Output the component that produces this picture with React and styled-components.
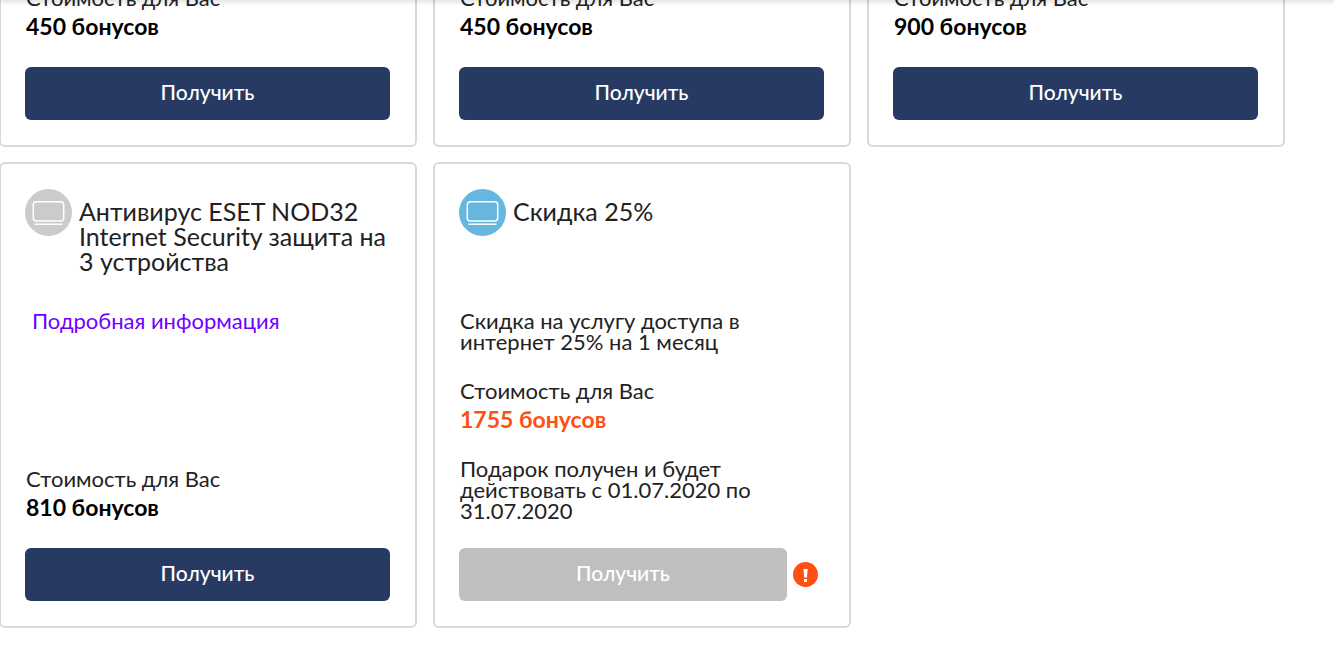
import React from "react";
import styled, { createGlobalStyle } from "styled-components";

const FONT = `Lato, "Noto Sans", sans-serif`;

const GlobalStyle = createGlobalStyle`
    body {
        margin: 0;
        background-color: white;
        color: #222;
        font-family: ${FONT};
        font-size: 22px;
        line-height: 21px;
    }
`;

const Page = styled.main`
    overflow: hidden;
    padding-bottom: 44px;
`;

const HeaderEdge = styled.div`
    position: fixed;
    top: 0;
    left: 0;
    right: 0;
    height: 0;
    box-shadow: 0 0 5px 1px rgba(0, 0, 0, 0.3);
`;

const Gifts = styled.div`
    display: grid;
    grid-template-columns: repeat(3, 1fr);
    gap: 15px 16px;
    margin: -16px 49px 0 -1px;
`;

const Card = styled.article`
    display: flex;
    flex-direction: column;
    box-sizing: border-box;
    min-height: ${({ $collapsed }) => ($collapsed ? "0" : "466px")};
    padding: ${({ $collapsed }) => ($collapsed ? "0" : "25px")} 25px 25px 24px;
    border: 2px solid #d9d9d9;
    border-top-width: ${({ $collapsed }) => ($collapsed ? "0" : "2px")};
    border-radius: 6px;
`;

const CardHeader = styled.header`
    display: flex;
    align-items: flex-start;
    gap: 7px;
    min-height: 121px;

    svg {
        flex: none;
    }
`;

const Title = styled.h2`
    margin: 0;
    padding-top: 10px;
    font-size: 25px;
    font-weight: 400;
    line-height: 25px;
`;

const Description = styled.p`
    margin: 0;
    padding-left: 1px;
    max-width: 310px;
`;

const DetailsLink = styled.a`
    padding-left: 7px;
    color: #7000ff;
    text-decoration: none;
`;

const Cost = styled.div`
    margin-top: auto;
    padding-left: 1px;
    line-height: 28px;

    strong {
        display: block;
        color: ${({ $accent }) => ($accent ? "#ff4f12" : "#000")};
        font-size: 23px;
        font-weight: 700;
    }
`;

const Note = styled.p`
    margin: 25px 0 0;
    padding-left: 1px;
    max-width: 310px;
`;

const Actions = styled.div`
    display: flex;
    align-items: center;
    gap: 6px;
    margin-top: 27px;
    padding-right: ${({ $warning }) => ($warning ? "6px" : "0")};
`;

const GetButton = styled.button`
    flex: 1;
    height: 53px;
    padding: 0 16px 4px;
    border: none;
    border-radius: 6px;
    background-color: #273a64;
    color: white;
    font-family: inherit;
    font-size: 21px;
    font-weight: 500;
    cursor: pointer;

    &:disabled {
        background-color: #bfbfbf;
        cursor: default;
    }
`;

const MonitorIcon = ({ color }) => (
    <svg width="47" height="47" viewBox="0 0 47 47" aria-hidden="true">
        <circle cx="23.5" cy="23.5" r="23.5" fill={color} />
        <g fill="none" stroke="white" strokeWidth="1.5">
            <rect x="8.3" y="12.8" width="30.4" height="19.2" rx="3" />
            <path d="M9.5 35.2H37.5" />
        </g>
    </svg>
);

const WarningIcon = () => (
    <svg width="25" height="25" viewBox="0 0 25 25" aria-hidden="true">
        <circle cx="12.5" cy="12.5" r="12.5" fill="#ff4f12" />
        <path d="M10.5 7H14.7L14 15.5H11.2Z" fill="white" />
        <rect x="11" y="17" width="3" height="3" fill="white" />
    </svg>
);

const GiftCard = ({
    title,
    iconColor,
    description,
    link,
    cost,
    note,
    received
}) => (
    <Card $collapsed={!title}>
        {title && (
            <CardHeader>
                <MonitorIcon color={iconColor} />
                <Title>{title}</Title>
            </CardHeader>
        )}
        {link && <DetailsLink href="#details">{link}</DetailsLink>}
        {description && <Description>{description}</Description>}
        <Cost $accent={received}>
            Стоимость для Вас
            <strong>{`${cost} бонусов`}</strong>
        </Cost>
        {note && <Note>{note}</Note>}
        <Actions $warning={received}>
            <GetButton type="button" disabled={received}>
                Получить
            </GetButton>
            {received && <WarningIcon />}
        </Actions>
    </Card>
);

const gifts = [
    { id: 1, cost: 450 },
    { id: 2, cost: 450 },
    { id: 3, cost: 900 },
    {
        id: 4,
        title: "Антивирус ESET NOD32 Internet Security защита на 3 устройства",
        iconColor: "#cbcbcb",
        link: "Подробная информация",
        cost: 810
    },
    {
        id: 5,
        title: "Скидка 25%",
        iconColor: "#66b6df",
        description: "Скидка на услугу доступа в интернет 25% на 1 месяц",
        cost: 1755,
        note: "Подарок получен и будет действовать с 01.07.2020 по 31.07.2020",
        received: true
    }
];

const App = () => (
    <>
        <GlobalStyle />
        <HeaderEdge />
        <Page>
            <Gifts>
                {gifts.map(({ id, ...gift }) => (
                    <GiftCard key={id} {...gift} />
                ))}
            </Gifts>
        </Page>
    </>
);

export default App;
